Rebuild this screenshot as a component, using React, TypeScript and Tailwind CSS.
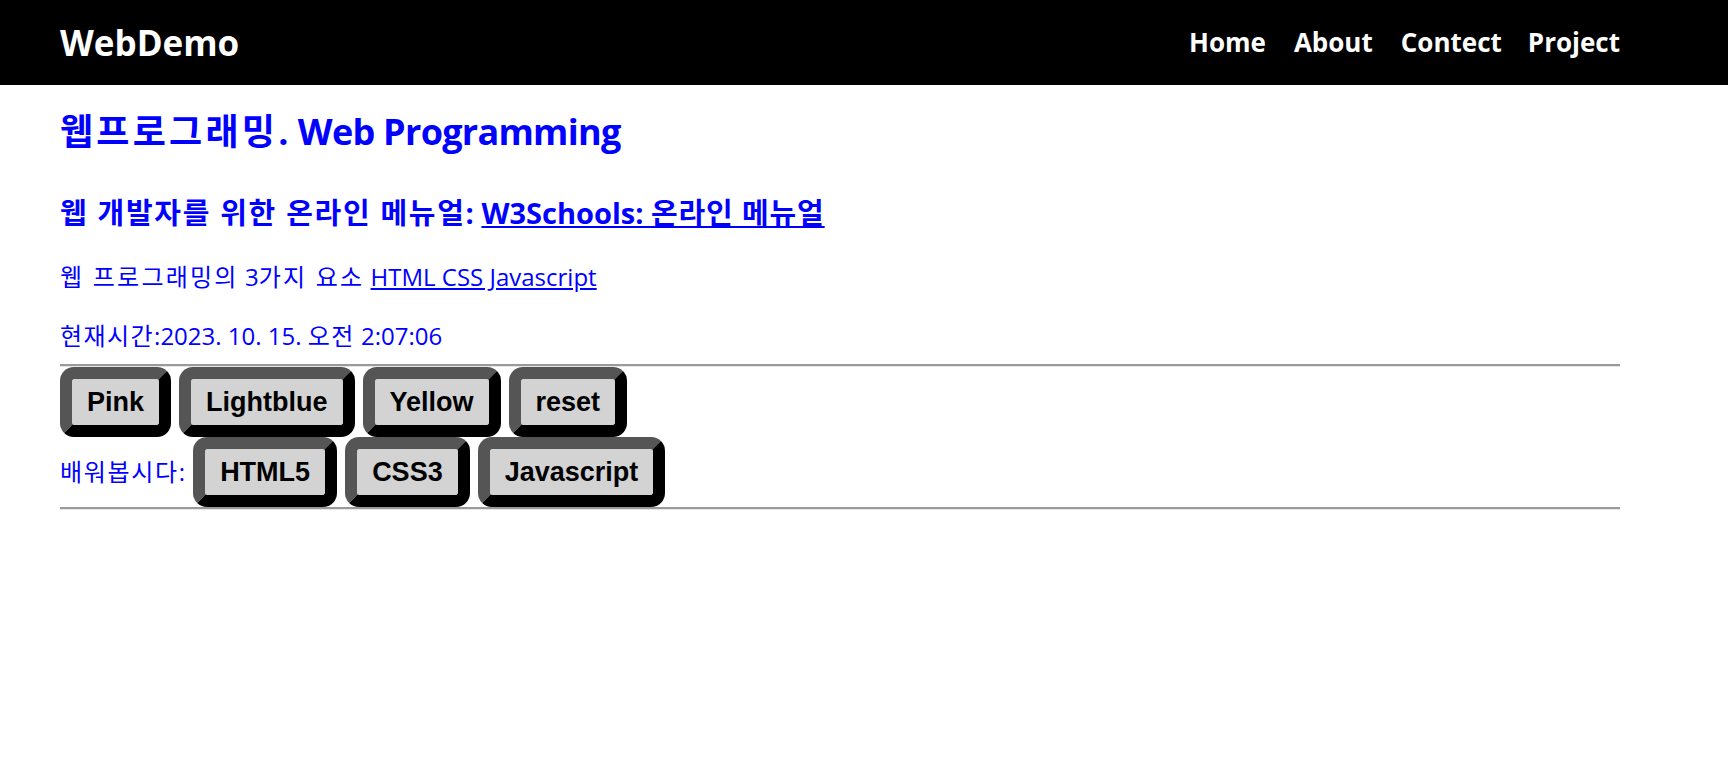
import React from 'react';

const sans = 'font-["Open_Sans","Noto_Sans_CJK_KR",sans-serif]';

// hangul runs are a bit wider in the original face
const K: React.FC<{ children: React.ReactNode; t?: string }> = ({ children, t = 'tracking-[0.06em]' }) => (
  <span className={t}>{children}</span>
);

const KeyButton: React.FC<{ label: string }> = ({ label }) => (
  <button
    className='rounded-[14px] border-[12px] border-t-[#555555] border-l-[#555555] border-b-black border-r-black bg-[#d3d3d3] px-[15px] py-[8px] font-["Liberation_Sans",Arial,sans-serif] text-[27px] font-bold leading-[30px] text-black'
  >
    {label}
  </button>
);

export default function App() {
  return (
    <div className={`min-h-[758px] bg-white ${sans}`}>
      {/* header */}
      <header className="h-[85px] bg-black">
        <div className="ml-[60px] flex h-full w-[1560px] items-center justify-between">
          <span className="text-[35px] font-bold leading-none text-white">WebDemo</span>
          <nav className="flex gap-[28px] text-[26px] font-bold text-white">
            <a href="#">Home</a>
            <a href="#">About</a>
            <a href="#">Contect</a>
            <a href="#" className="-ml-[2px]">Project</a>
          </nav>
        </div>
      </header>

      <main className="ml-[60px] w-[1560px] text-[#0000ff]">
        <h1 className="mt-[25px] text-[36px] font-bold leading-[43px]">
          <K t="tracking-[0.09em]">웹프로그래밍</K>.{' '}
          <span className="tracking-[-0.02em]">Web Programming</span>
        </h1>
        <h2 className="mt-[43px] text-[29px] font-bold leading-[33px]">
          <K t="tracking-[0.058em]">웹 개발자를 위한 온라인 메뉴얼</K>:{' '}
          <a href="#" className="underline">
            W3Schools: <K t="tracking-[0.03em]">온라인 메뉴얼</K>
          </a>
        </h2>
        <p className="mt-[33px] text-[24px] leading-[29px]">
          <K t="tracking-[0.093em]">웹 프로그래밍의</K> 3<K t="tracking-[0.093em]">가지 요소</K>{' '}
          <a href="#" className="underline">HTML CSS Javascript</a>
        </p>
        <p className="mt-[30px] text-[24px] leading-[29px]">
          <K>현재시간</K>:2023. 10. 15. <K>오전</K> 2:07:06
        </p>

        <div className="mt-[14px] border-t-[2px] border-b border-t-[#9a9a9a] border-b-[#e6e6e6]" />
        <div className="flex flex-wrap gap-[8px]">
          <KeyButton label="Pink" />
          <KeyButton label="Lightblue" />
          <KeyButton label="Yellow" />
          <KeyButton label="reset" />
        </div>
        <div className="flex items-baseline gap-[8px] text-[24px]">
          <span>
            <K t="tracking-[0.07em]">배워봅시다</K>:
          </span>
          <KeyButton label="HTML5" />
          <KeyButton label="CSS3" />
          <KeyButton label="Javascript" />
        </div>
        <div className="border-t-[2px] border-b border-t-[#9a9a9a] border-b-[#e6e6e6]" />
      </main>
    </div>
  );
}
